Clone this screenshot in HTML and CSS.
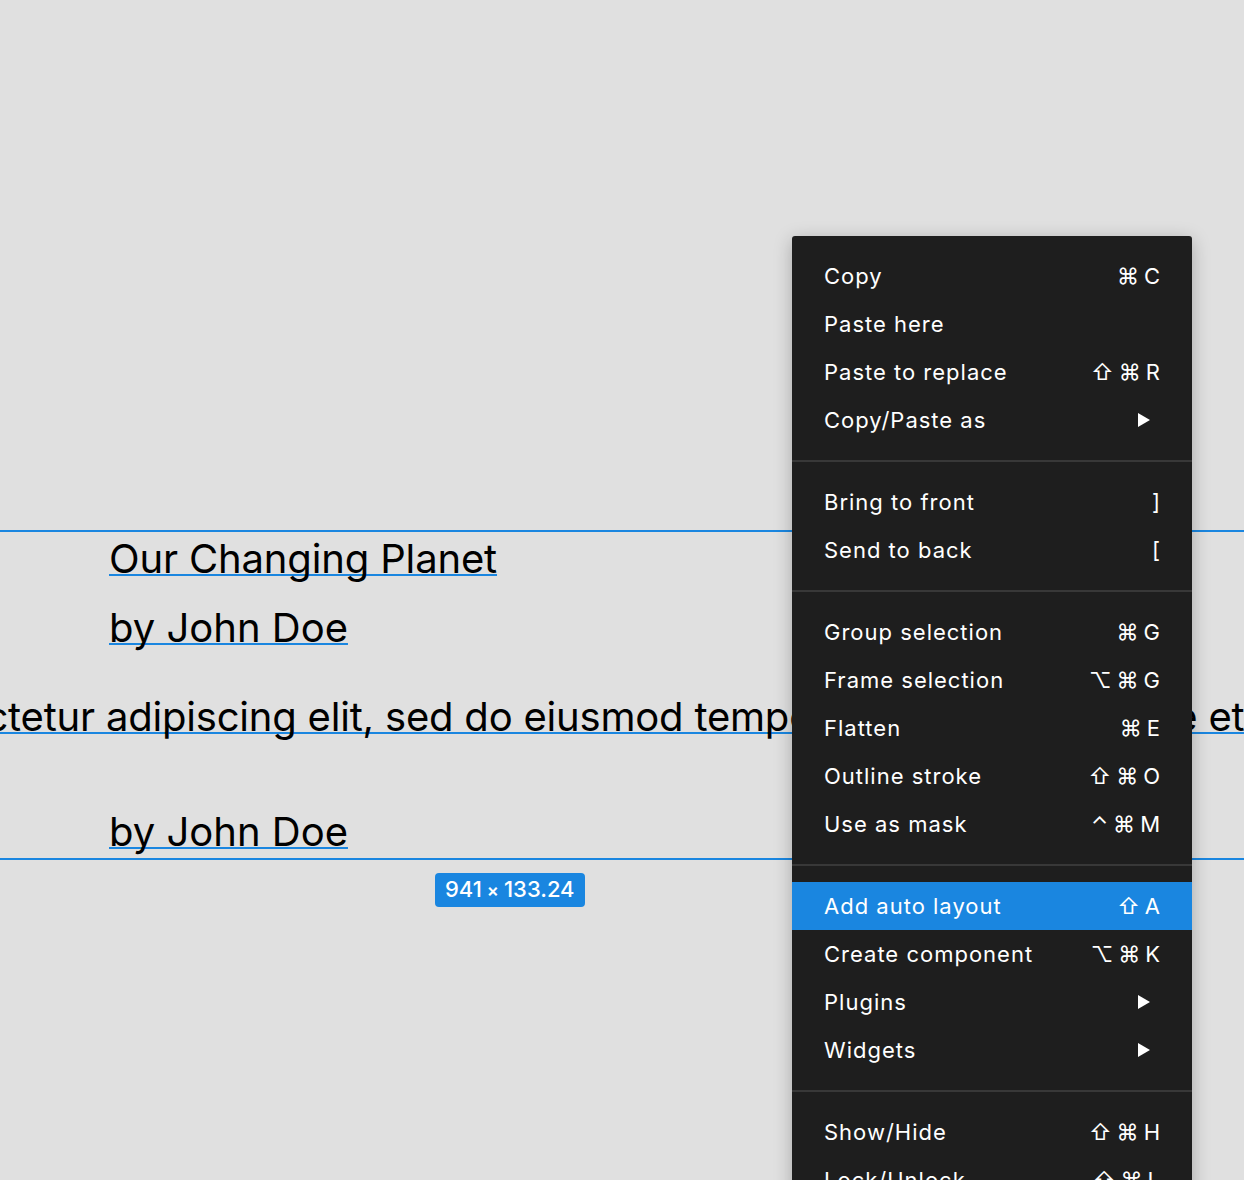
FILE: index.html
```html
<html>
<head>
<meta charset="UTF-8">
<title>Canvas</title>
<link rel="stylesheet" href="styles.css">
</head>
<body>
    <div class="canvas">
        <div class="frame">
            <div class="line title"><span class="hover">Our Changing Planet</span></div>
            <div class="line byline"><span class="hover">by John Doe</span></div>
            <div class="line body-text"><span class="hover">Lorem ipsum dolor sit amet, consectetur adipiscing elit, sed do eiusmod tempor incididunt ut labore et dolore magna aliqua.</span></div>
            <div class="line byline last"><span class="hover">by John Doe</span></div>
        </div>
        <div class="size-badge">941<span class="times">×</span>133.24</div>
    </div>

    <div class="menu">
        <div class="group">
            <div class="item"><span>Copy</span><span class="keys"><i>⌘</i><i>C</i></span></div>
            <div class="item"><span>Paste here</span></div>
            <div class="item"><span>Paste to replace</span><span class="keys"><i>⇧</i><i>⌘</i><i>R</i></span></div>
            <div class="item"><span>Copy/Paste as</span><svg class="arrow" viewBox="0 0 12 14"><polygon points="0,0 12,7 0,14" fill="#fff"/></svg></div>
        </div>
        <div class="sep"></div>
        <div class="group">
            <div class="item"><span>Bring to front</span><span class="keys"><i>]</i></span></div>
            <div class="item"><span>Send to back</span><span class="keys"><i>[</i></span></div>
        </div>
        <div class="sep"></div>
        <div class="group">
            <div class="item"><span>Group selection</span><span class="keys"><i>⌘</i><i>G</i></span></div>
            <div class="item"><span>Frame selection</span><span class="keys"><i>⌥</i><i>⌘</i><i>G</i></span></div>
            <div class="item"><span>Flatten</span><span class="keys"><i>⌘</i><i>E</i></span></div>
            <div class="item"><span>Outline stroke</span><span class="keys"><i>⇧</i><i>⌘</i><i>O</i></span></div>
            <div class="item"><span>Use as mask</span><span class="keys"><i>⌃</i><i>⌘</i><i>M</i></span></div>
        </div>
        <div class="sep"></div>
        <div class="group">
            <div class="item active"><span>Add auto layout</span><span class="keys"><i>⇧</i><i>A</i></span></div>
            <div class="item"><span>Create component</span><span class="keys"><i>⌥</i><i>⌘</i><i>K</i></span></div>
            <div class="item"><span>Plugins</span><svg class="arrow" viewBox="0 0 12 14"><polygon points="0,0 12,7 0,14" fill="#fff"/></svg></div>
            <div class="item"><span>Widgets</span><svg class="arrow" viewBox="0 0 12 14"><polygon points="0,0 12,7 0,14" fill="#fff"/></svg></div>
        </div>
        <div class="sep"></div>
        <div class="group">
            <div class="item"><span>Show/Hide</span><span class="keys"><i>⇧</i><i>⌘</i><i>H</i></span></div>
            <div class="item"><span>Lock/Unlock</span><span class="keys"><i>⇧</i><i>⌘</i><i>L</i></span></div>
        </div>
    </div>
</body>
</html>
```

FILE: styles.css
```css
body {
    margin: 0;
    background-color: #e0e0e0;
    font-family: Inter, "Noto Sans", sans-serif;
    overflow: hidden;
    height: 1180px;
}
.canvas {
    padding-top: 530px;
    overflow: hidden;
}
.frame {
    border-top: 2px solid #1a86e0;
    border-bottom: 2px solid #1a86e0;
    padding: 3px 0 2px 0;
}
.line {
    font-size: 40px;
    line-height: 48px;
    height: 48px;
    color: #000000;
    white-space: nowrap;
    padding-left: 109px;
}
.title {
    letter-spacing: -0.15px;
}
.hover {
    text-decoration: underline;
    text-decoration-color: #1a86e0;
    text-decoration-thickness: 2px;
    text-underline-offset: 1px;
    text-decoration-skip-ink: none;
}
.byline {
    margin-top: 21px;
}
.body-text {
    margin-top: 41px;
    margin-left: -768px;
    letter-spacing: -0.2px;
}
.byline.last {
    margin-top: 67px;
}
.size-badge {
    display: inline-block;
    margin: 13px 0 0 435px;
    background-color: #1a86e0;
    color: #ffffff;
    border-radius: 4px;
    font-size: 22px;
    font-weight: 500;
    line-height: 33px;
    padding: 0 10px;
}
.times {
    font-size: 18px;
    font-weight: 600;
    margin: 0 5px;
}

.menu {
    position: absolute;
    left: 792px;
    top: 236px;
    width: 400px;
    background-color: #1e1e1e;
    border-radius: 3px;
    box-shadow: 0 4px 18px rgba(0, 0, 0, 0.25);
    color: #ffffff;
    font-size: 22px;
    letter-spacing: 1px;
}
.group {
    padding: 16px 0;
}
.sep {
    height: 2px;
    background-color: #383838;
}
.item {
    height: 48px;
    padding: 0 32px;
    display: flex;
    align-items: center;
    justify-content: space-between;
}
.item.active {
    background-color: #1a86e0;
}
.keys {
    display: flex;
    gap: 5px;
    letter-spacing: 0;
}
.keys i {
    font-style: normal;
}
.arrow {
    width: 12px;
    height: 14px;
    margin-right: 10px;
}
```
